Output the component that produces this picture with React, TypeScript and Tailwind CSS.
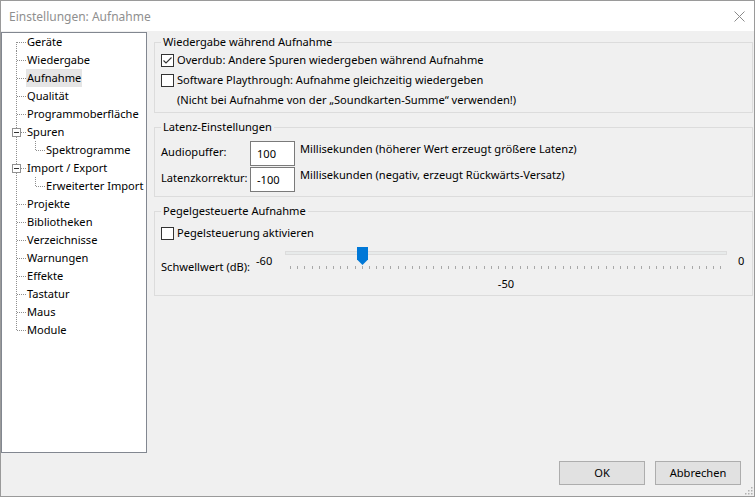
import React from 'react';

type TreeItem = {
  label: string;
  kind?: 'first' | 'last' | 'parent' | 'child';
  selected?: boolean;
};

const treeItems: TreeItem[] = [
  { label: 'Geräte', kind: 'first' },
  { label: 'Wiedergabe' },
  { label: 'Aufnahme', selected: true },
  { label: 'Qualität' },
  { label: 'Programmoberfläche' },
  { label: 'Spuren', kind: 'parent' },
  { label: 'Spektrogramme', kind: 'child' },
  { label: 'Import / Export', kind: 'parent' },
  { label: 'Erweiterter Import', kind: 'child' },
  { label: 'Projekte' },
  { label: 'Bibliotheken' },
  { label: 'Verzeichnisse' },
  { label: 'Warnungen' },
  { label: 'Effekte' },
  { label: 'Tastatur' },
  { label: 'Maus' },
  { label: 'Module', kind: 'last' },
];

const DOT = '#8f8f8f';

function Connector({ kind }: { kind?: TreeItem['kind'] }) {
  const isChild = kind === 'child';
  const w = isChild ? 42 : 23;
  return (
    <svg width={w} height={18} className="shrink-0" shapeRendering="crispEdges">
      {/* main vertical line */}
      {kind === 'first' && <line x1={13.5} y1={9} x2={13.5} y2={18} stroke={DOT} strokeDasharray="1 1" />}
      {kind === 'last' && <line x1={13.5} y1={0} x2={13.5} y2={10} stroke={DOT} strokeDasharray="1 1" />}
      {(kind === undefined || kind === 'child') && (
        <line x1={13.5} y1={0} x2={13.5} y2={18} stroke={DOT} strokeDasharray="1 1" />
      )}
      {kind === 'parent' && (
        <>
          <line x1={13.5} y1={0} x2={13.5} y2={5} stroke={DOT} strokeDasharray="1 1" />
          <line x1={13.5} y1={14} x2={13.5} y2={18} stroke={DOT} strokeDasharray="1 1" />
          <rect x={9.5} y={5.5} width={8} height={8} fill="#fff" stroke="#919191" />
          <line x1={11} y1={9.5} x2={16} y2={9.5} stroke="#333" />
          <line x1={18} y1={9.5} x2={23} y2={9.5} stroke={DOT} strokeDasharray="1 1" />
        </>
      )}
      {kind !== 'parent' && !isChild && (
        <line x1={14} y1={9.5} x2={23} y2={9.5} stroke={DOT} strokeDasharray="1 1" />
      )}
      {isChild && (
        <>
          <line x1={32.5} y1={0} x2={32.5} y2={10} stroke={DOT} strokeDasharray="1 1" />
          <line x1={33} y1={9.5} x2={42} y2={9.5} stroke={DOT} strokeDasharray="1 1" />
        </>
      )}
    </svg>
  );
}

function Checkbox({ checked }: { checked?: boolean }) {
  return (
    <span className="w-[13px] h-[13px] shrink-0 border border-[#333333] bg-white flex items-center justify-center">
      {checked && (
        <svg width={11} height={11} viewBox="0 0 11 11">
          <path d="M1.5 5.5 L4 8 L9.5 2.5" fill="none" stroke="#333" strokeWidth={1.1} />
        </svg>
      )}
    </span>
  );
}

function NumberBox({ value }: { value: string }) {
  return (
    <div className="w-[45px] h-[25px] shrink-0 border border-[#7a7a7a] bg-white flex items-center pl-[6px] leading-[16px]">
      {value}
    </div>
  );
}

export default function App() {
  return (
    <div
      className="w-[755px] h-[497px] border border-[#9a9a9a] bg-[#f0f0f0] flex flex-col text-[11.1px] text-black leading-[16px]"
      style={{ fontFamily: '"Noto Sans", "Open Sans", sans-serif' }}
    >
      {/* Title bar */}
      <div className="h-[30px] bg-white flex items-center justify-between pl-[8px] pr-[9px] pt-[1px] shrink-0">
        <span className="text-[#8f8f8f] text-[12px]">Einstellungen: Aufnahme</span>
        <svg width={11} height={11} viewBox="0 0 11 11">
          <path d="M0.5 0.5 L10.5 10.5 M10.5 0.5 L0.5 10.5" stroke="#8a8a8a" strokeWidth={1} />
        </svg>
      </div>

      {/* Body */}
      <div className="flex h-[422px] shrink-0">
        {/* Tree */}
        <div className="w-[146px] h-[421px] mt-[1px] border border-[#828790] bg-white pl-[1px] flex flex-col overflow-hidden">
          {treeItems.map((it) => (
            <div key={it.label} className="h-[18px] flex items-center">
              <Connector kind={it.kind} />
              <span
                className={
                  'px-[1px] h-[18px] flex items-center whitespace-nowrap ' +
                  (it.selected ? 'bg-[#e5e5e5]' : '')
                }
              >
                {it.label}
              </span>
            </div>
          ))}
        </div>

        {/* Settings panel */}
        <div className="flex-1 ml-[7px] mr-[1px] pt-[3px] flex flex-col">
          <fieldset className="border border-[#dcdcdc] px-[6px] pb-[2px]">
            <legend className="px-[2px] leading-[16px]">Wiedergabe während Aufnahme</legend>
            <div className="h-[20px] flex items-center gap-[3px]">
              <Checkbox checked />
              <span>Overdub: Andere Spuren wiedergeben während Aufnahme</span>
            </div>
            <div className="h-[20px] flex items-center gap-[3px]">
              <Checkbox />
              <span>Software Playthrough: Aufnahme gleichzeitig wiedergeben</span>
            </div>
            <div className="h-[20px] flex items-center pl-[16px]">
              (Nicht bei Aufnahme von der „Soundkarten-Summe“ verwenden!)
            </div>
          </fieldset>

          <fieldset className="mt-[6px] border border-[#dcdcdc] px-[6px] pt-[6px] pb-[4px]">
            <legend className="px-[2px] leading-[16px]">Latenz-Einstellungen</legend>
            <div className="flex items-start">
              <span className="w-[89px] pt-[3px]">Audiopuffer:</span>
              <NumberBox value="100" />
              <span className="ml-[5px]">Millisekunden (höherer Wert erzeugt größere Latenz)</span>
            </div>
            <div className="flex items-start mt-[1px]">
              <span className="w-[89px] pt-[3px]">Latenzkorrektur:</span>
              <NumberBox value="-100" />
              <span className="ml-[5px]">Millisekunden (negativ, erzeugt Rückwärts-Versatz)</span>
            </div>
          </fieldset>

          <fieldset className="mt-[6px] border border-[#dcdcdc] pl-[6px] pt-[4px] pb-[3px]">
            <legend className="px-[2px] leading-[16px]">Pegelgesteuerte Aufnahme</legend>
            <div className="h-[20px] flex items-center gap-[3px]">
              <Checkbox />
              <span>Pegelsteuerung aktivieren</span>
            </div>
            <div className="flex items-start pt-[2px]">
              <span className="w-[95px] mt-[14px] whitespace-nowrap">Schwellwert (dB):</span>
              <span className="w-[29px] mt-[8px]">-60</span>
              <div className="flex-1 flex flex-col">
                <div className="relative h-[21px]">
                  <div className="mt-[6px] h-[4px] border border-[#dcdcdc] bg-[#e7eaea]" />
                  <svg
                    width={11}
                    height={18}
                    viewBox="0 0 11 18"
                    className="absolute top-[2px] left-[72px]"
                  >
                    <path d="M0 0 H11 V12.5 L5.5 18 L0 12.5 Z" fill="#0078d7" />
                  </svg>
                </div>
                <div className="h-[4px] px-[5px] flex justify-between items-start">
                  {Array.from({ length: 61 }).map((_, i) => (
                    <span key={i} className="w-[1px] h-[3px] bg-[#a8a8a8]" />
                  ))}
                </div>
                <div className="mt-[6px] text-center">-50</div>
              </div>
              <span className="ml-[11px] mt-[8px] w-[8px]">0</span>
              <span className="w-[6px]" />
            </div>
          </fieldset>
        </div>
      </div>

      {/* Footer */}
      <div className="relative flex-1 flex justify-end items-start pt-[8px] pr-[13px] gap-[10px]">
        <button className="w-[86px] h-[24px] border border-[#adadad] bg-[#e1e1e1] text-center">OK</button>
        <button className="w-[86px] h-[24px] border border-[#adadad] bg-[#e1e1e1] text-center">Abbrechen</button>
        <svg width={9} height={9} viewBox="0 0 9 9" className="absolute right-[1px] bottom-[1px]">
          {[
            [7, 1],
            [4, 4],
            [7, 4],
            [1, 7],
            [4, 7],
            [7, 7],
          ].map(([x, y]) => (
            <rect key={`${x}-${y}`} x={x} y={y} width={1.5} height={1.5} fill="#b0b0b0" />
          ))}
        </svg>
      </div>
    </div>
  );
}
